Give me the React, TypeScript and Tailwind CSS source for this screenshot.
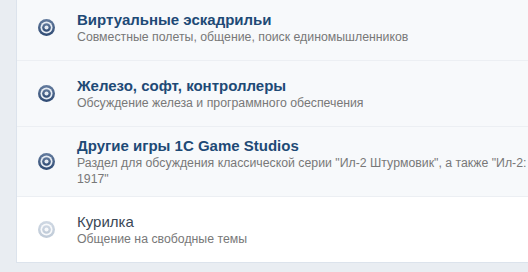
import React from "react";

function ForumIcon({ faded }: { faded?: boolean }) {
  const id = faded ? "gf" : "gd";
  return (
    <svg width="17" height="17" viewBox="0 0 16 16" className="shrink-0">
      <defs>
        <linearGradient id={id} x1="0" y1="0" x2="0" y2="1">
          <stop offset="0" stopColor={faded ? "#cfd8e3" : "#647c9e"} />
          <stop offset="1" stopColor={faded ? "#bfcad7" : "#2e4a73"} />
        </linearGradient>
      </defs>
      <circle cx="8" cy="8" r="8" fill={`url(#${id})`} />
      <circle cx="8" cy="8" r="5.7" fill={faded ? "#f8f9fb" : "#e6ecf3"} />
      <circle cx="8" cy="8" r="4.1" fill={`url(#${id})`} />
      <circle cx="8" cy="8" r="1.9" fill={faded ? "#f8f9fb" : "#e6ecf3"} />
    </svg>
  );
}

type Row = {
  title: string;
  desc: React.ReactNode;
  bold: boolean;
  faded?: boolean;
  bg: string;
};

const rows: Row[] = [
  {
    title: "Виртуальные эскадрильи",
    desc: "Совместные полеты, общение, поиск единомышленников",
    bold: true,
    bg: "bg-[#f7f9fb]",
  },
  {
    title: "Железо, софт, контроллеры",
    desc: "Обсуждение железа и программного обеспечения",
    bold: true,
    bg: "bg-[#f7f9fb]",
  },
  {
    title: "Другие игры 1C Game Studios",
    desc: (
      <>
        <span className="whitespace-nowrap">
          Раздел для обсуждения классической серии "Ил-2 Штурмовик", а также "Ил-2: Битва за Британию" и "Rise of Flight
        </span>
        <br />
        1917"
      </>
    ),
    bold: true,
    bg: "bg-[#f7f9fb]",
  },
  {
    title: "Курилка",
    desc: "Общение на свободные темы",
    bold: false,
    faded: true,
    bg: "bg-white",
  },
];

export default function App() {
  return (
    <div className="h-[272px] w-[528px] overflow-hidden bg-[#e9edf2] pl-4 font-['Liberation_Sans',Arial,sans-serif]">
      <div className="-mt-[5px] w-[700px] border-l border-b border-[#dce3ec]">
        {rows.map((r, i) => {
          const last = i === rows.length - 1;
          return (
            <div
              key={i}
              className={`flex items-center py-[9px] pl-[21px] ${r.bg} ${
                last ? "min-h-[65px]" : "min-h-[66px] border-b border-[#eceff3]"
              }`}
            >
              <ForumIcon faded={r.faded} />
              <div className="ml-[22px] flex flex-col">
                <div
                  className={`text-[15px] leading-[19px] ${
                    r.bold ? "font-bold text-[#1e4a76]" : "font-normal text-[#3a4756]"
                  }`}
                >
                  {r.title}
                </div>
                <div className="text-[12.3px] leading-[16px] text-[#787878]">{r.desc}</div>
              </div>
            </div>
          );
        })}
      </div>
    </div>
  );
}
